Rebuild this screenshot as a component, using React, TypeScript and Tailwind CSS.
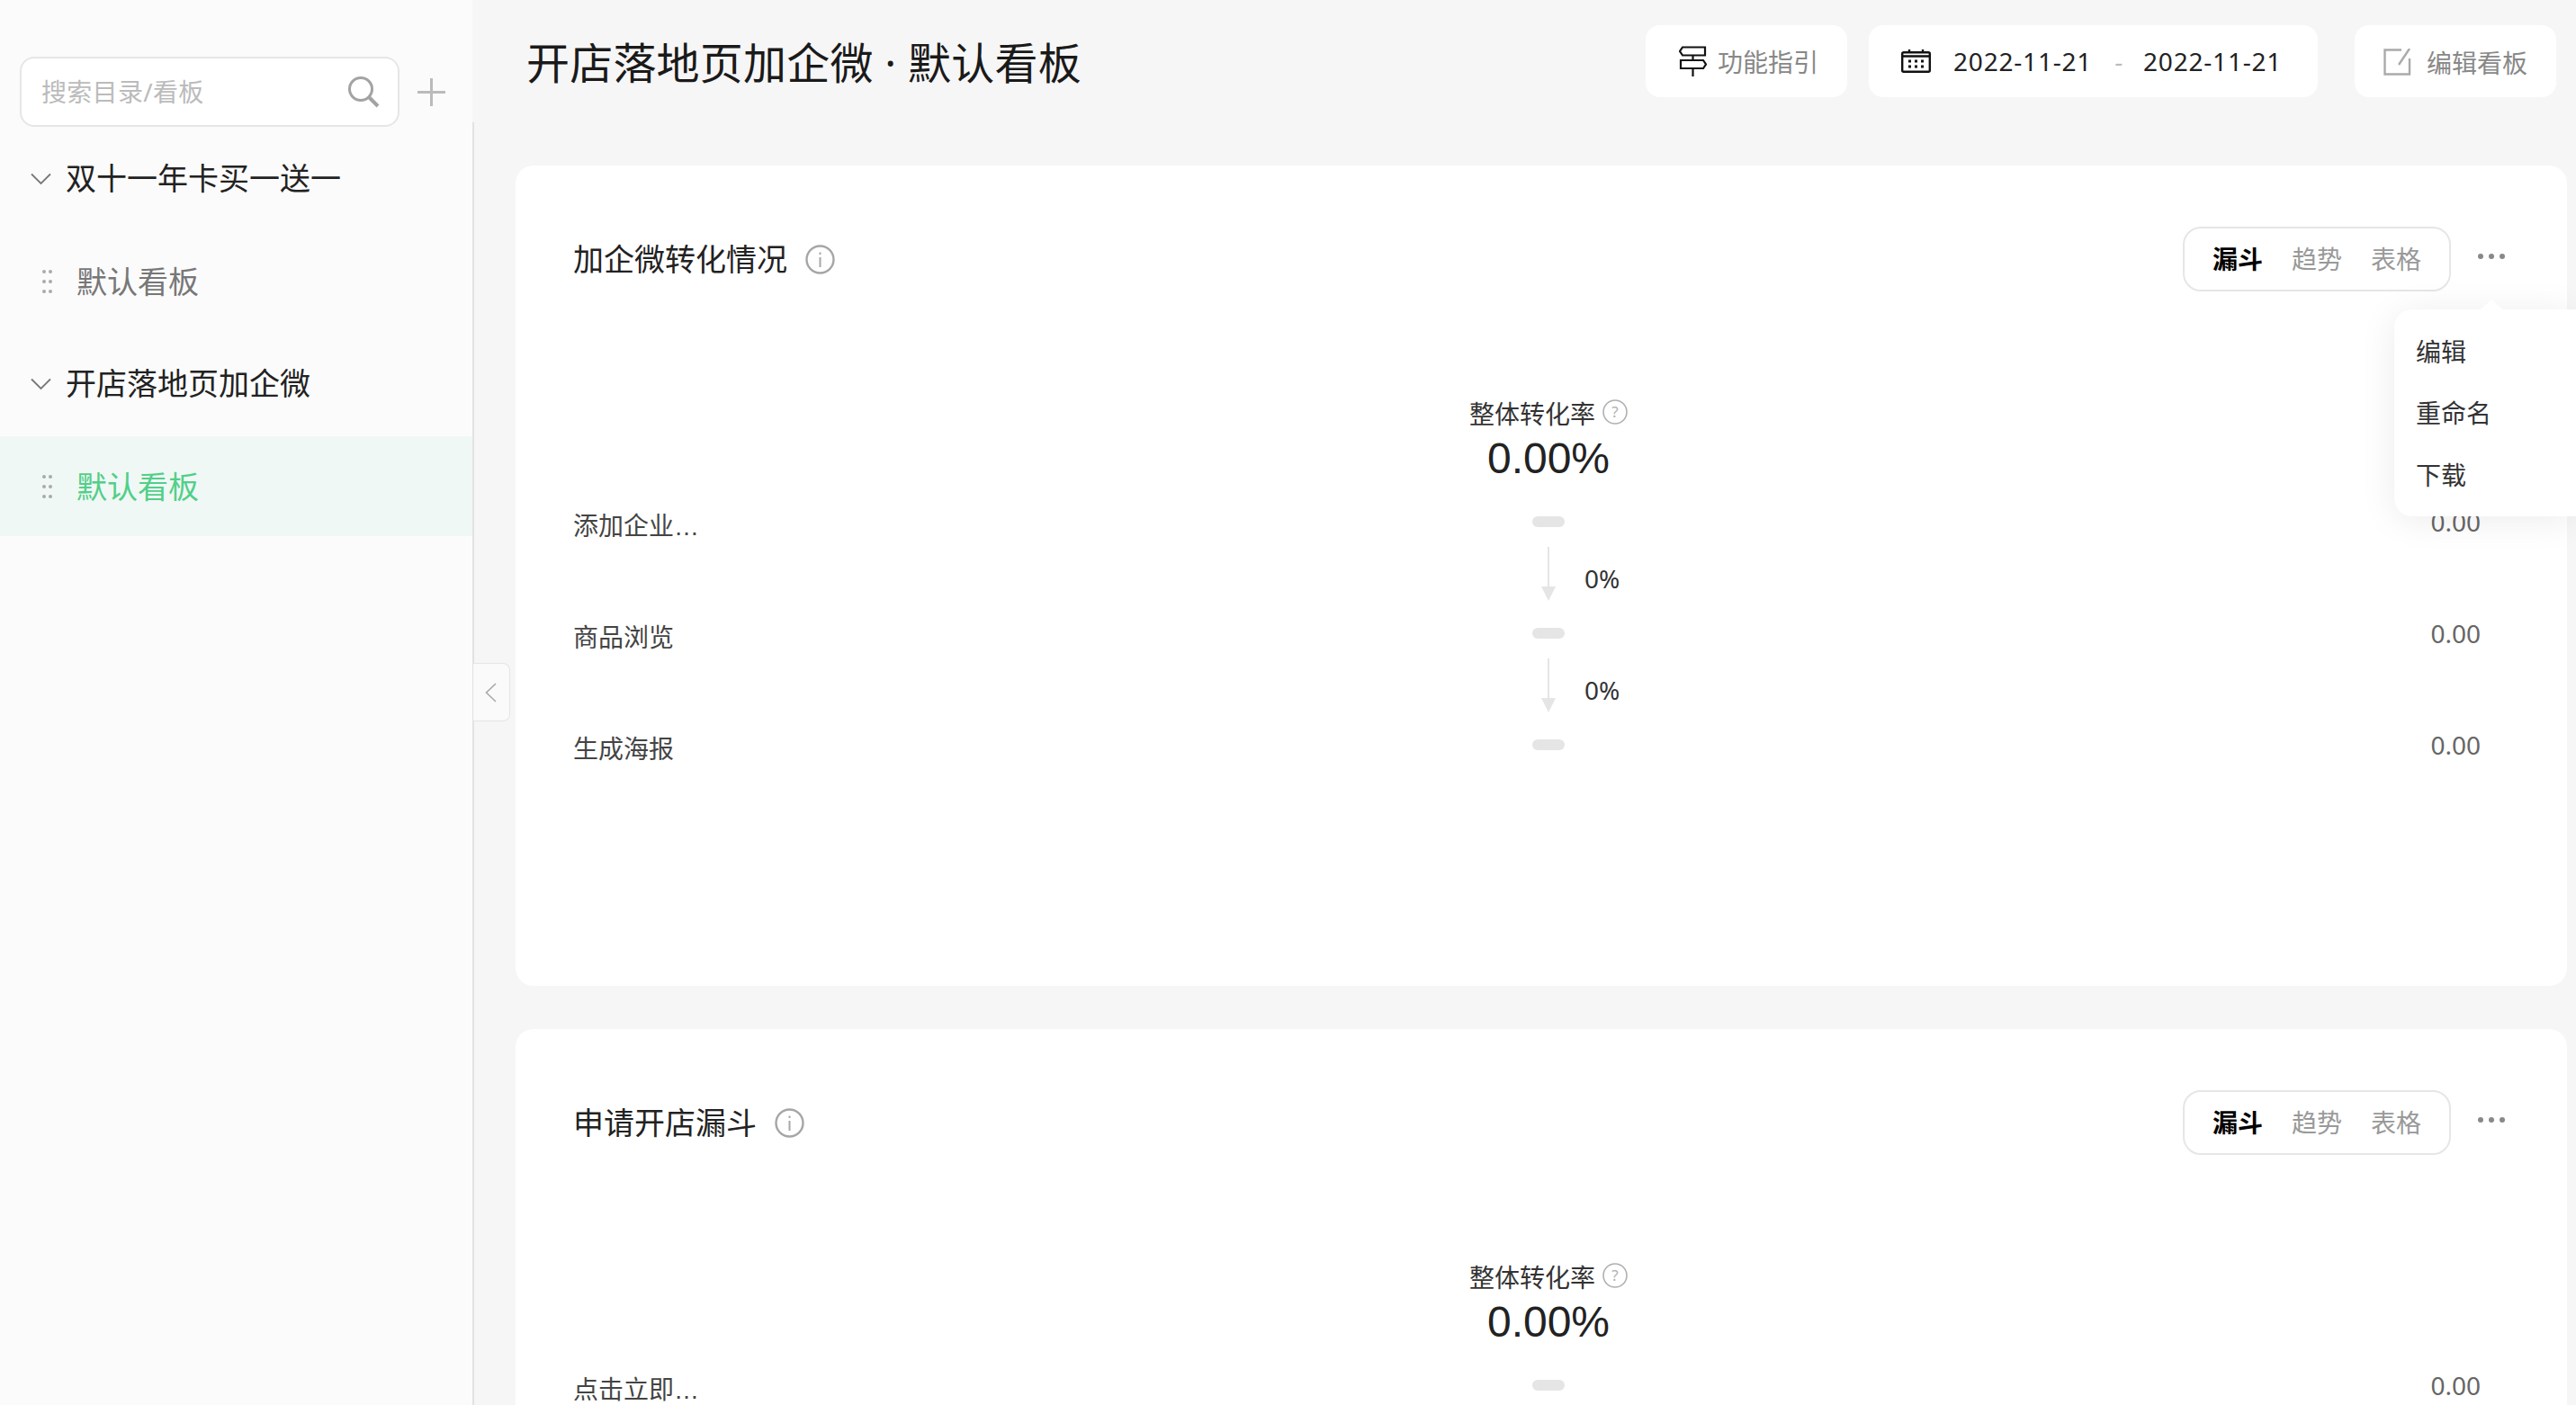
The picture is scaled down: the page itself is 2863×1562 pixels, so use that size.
import type { ReactNode } from "react";

const FONT = "font-['Noto_Sans','Noto_Sans_CJK_SC',sans-serif]";

function Chevron() {
  return (
    <svg width="23" height="14" viewBox="0 0 23 14" fill="none" stroke="#777" strokeWidth="1.8">
      <path d="M1 1.5 11.5 12 22 1.5" />
    </svg>
  );
}

function DragDots() {
  return (
    <div className="grid w-[11px] grid-cols-2 gap-x-[3px] gap-y-[7px]">
      {[0, 1, 2, 3, 4, 5].map((i) => (
        <span key={i} className="h-1 w-1 rounded-full bg-[#aaa]" />
      ))}
    </div>
  );
}

function TreeGroup({ title }: { title: string }) {
  return (
    <div className="flex h-[111px] items-center gap-[16px] pl-[34px] text-[34px] text-[#222]">
      <Chevron />
      <span>{title}</span>
    </div>
  );
}

function TreeItem({ active = false }: { active?: boolean }) {
  return (
    <div
      className={
        active
          ? "flex h-[111px] items-center gap-[27px] bg-[#f0f8f5] pl-[47px] text-[34px] text-[#52cf88]"
          : "flex h-[111px] items-center gap-[27px] pl-[47px] text-[34px] text-[#777]"
      }
    >
      <DragDots />
      <span className="pt-[2px]">默认看板</span>
    </div>
  );
}

function Sidebar() {
  return (
    <aside className="h-full w-[525px] shrink-0 bg-[#fbfbfb] pt-[63px]">
      <div className="flex items-center pl-[22px]">
        <div className="flex h-[78px] w-[422px] items-center justify-between rounded-[16px] border-2 border-[#e6e6e6] bg-white pr-[20px] pl-[22px]">
          <input
            placeholder="搜索目录/看板"
            className="w-[240px] bg-transparent text-[28px] tracking-[0.3px] outline-none placeholder:text-[#bbb]"
          />
          <svg width="36" height="36" viewBox="0 0 36 36" fill="none" stroke="#a3a3a3" strokeWidth="3">
            <circle cx="15" cy="15" r="12.5" />
            <path d="M24 24 34 34" strokeWidth="4" />
          </svg>
        </div>
        <svg className="ml-[20px]" width="31" height="31" viewBox="0 0 31 31" stroke="#bbb" strokeWidth="3">
          <path d="M0 15.5H31M15.5 0V31" />
        </svg>
      </div>
      <div className="mt-[2px] flex flex-col gap-[3px]">
        <TreeGroup title="双十一年卡买一送一" />
        <TreeItem />
        <TreeGroup title="开店落地页加企微" />
        <TreeItem active />
      </div>
    </aside>
  );
}

function HeaderButton({ className, children }: { className: string; children: ReactNode }) {
  return (
    <div className={`flex h-[80px] items-center rounded-[16px] bg-white ${className}`}>
      {children}
    </div>
  );
}

function TopBar() {
  return (
    <header className="flex h-[136px] items-start justify-between pt-[28px] pr-[22px] pl-[60px]">
      <h1 className="text-[48px] leading-[84px] font-normal tracking-[0.2px] text-[#1a1a1a]">
        开店落地页加企微 · 默认看板
      </h1>
      <div className="flex">
        <HeaderButton className="w-[224px] gap-[12px] pl-[37px] text-[28px] text-[#888]">
          <svg width="31" height="34" viewBox="0 0 31 34" fill="none" stroke="#111" strokeWidth="2.2">
            <path d="M4 1.5H29V10.5H4L1 6Z" />
            <path d="M2 16H27L30 20.5L27 25H2Z" />
            <path d="M15.5 10.5V16M15.5 25V34" />
          </svg>
          <span className="pt-[2px]">功能指引</span>
        </HeaderButton>
        <HeaderButton className="ml-[24px] w-[499px] pl-[36px] text-[28px] tracking-[0.8px] text-[#222]">
          <svg width="33" height="26" viewBox="0 0 33 26" fill="none" stroke="#111" strokeWidth="2.4">
            <rect x="1.2" y="3.2" width="30.6" height="21.6" rx="1.5" />
            <path d="M1 7.5H32M9 0V4M24 0V4" />
            <path d="M8 13h3M15 13h3M22 13h3M8 19h3M15 19h3M22 19h3" strokeWidth="3" />
          </svg>
          <span className="ml-[25px]">2022-11-21</span>
          <span className="ml-[25px] text-[#bbb]">-</span>
          <span className="ml-[22px]">2022-11-21</span>
        </HeaderButton>
        <HeaderButton className="ml-[41px] w-[224px] gap-[17px] pt-[2px] pl-[32px] text-[28px] text-[#888]">
          <svg width="31" height="30" viewBox="0 0 31 30" fill="none" stroke="#aaa" strokeWidth="2.4">
            <path d="M20 1.5H1.5V28.5H29V11" />
            <path d="M29 0 17 18" />
          </svg>
          <span className="pt-[2px]">编辑看板</span>
        </HeaderButton>
      </div>
    </header>
  );
}

function InfoIcon() {
  return (
    <svg width="33" height="33" viewBox="0 0 33 33" fill="none" stroke="#a6a6a6" strokeWidth="2.4">
      <circle cx="16.5" cy="16.5" r="15" />
      <path d="M16.5 14V25" strokeWidth="2" />
      <path d="M16.5 8.5V11" strokeWidth="2" />
    </svg>
  );
}

function DownArrow() {
  return (
    <svg width="16" height="60" viewBox="0 0 16 60" fill="#e5e5e5">
      <rect x="7" y="0" width="2" height="46" />
      <path d="M0 44H16L8 60Z" />
    </svg>
  );
}

const GRID = "grid grid-cols-[200px_1fr_152px]";

function FunnelRow({ label, value = "0.00" }: { label: string; value?: string }) {
  return (
    <div className={`${GRID} h-[40px] items-center text-[28px]`}>
      <span className="pt-[12px] font-['Liberation_Sans','Noto_Sans_CJK_SC',sans-serif] text-[#444]">{label}</span>
      <div className="flex justify-center">
        <span className="h-[12px] w-[36px] rounded-full bg-[#e5e5e5]" />
      </div>
      <span className="text-right text-[#666]">{value}</span>
    </div>
  );
}

function FunnelStep() {
  return (
    <div className={`${GRID} h-[84px]`}>
      <span />
      <div className="relative flex justify-center pt-[15px]">
        <DownArrow />
        <span className="absolute top-[30px] left-1/2 ml-[40px] text-[28px] leading-[40px] text-[#333]">0%</span>
      </div>
      <span />
    </div>
  );
}

interface CardProps {
  title: string;
  labels: string[];
}

function FunnelCard({ title, labels }: CardProps) {
  return (
    <section className="h-[912px] shrink-0 rounded-[20px] bg-white pt-[68px] pr-[69px] pl-[64px]">
      <div className="flex h-[72px] items-center justify-between">
        <div className="flex items-center gap-[20px]">
          <h2 className="text-[34px] font-normal text-[#222]">{title}</h2>
          <InfoIcon />
        </div>
        <div className="flex items-center gap-[30px]">
          <div className="flex h-[72px] w-[298px] items-center gap-[32px] rounded-[20px] border-2 border-[#e6e6e6] pl-[31px] text-[28px] text-[#999]">
            <span className="font-bold text-black">漏斗</span>
            <span>趋势</span>
            <span>表格</span>
          </div>
          <div className="mb-[6px] flex gap-[6px]">
            <span className="h-[6px] w-[6px] rounded-full bg-[#888]" />
            <span className="h-[6px] w-[6px] rounded-full bg-[#888]" />
            <span className="h-[6px] w-[6px] rounded-full bg-[#888]" />
          </div>
        </div>
      </div>
      <div className={`${GRID} mt-[116px] pr-[27px]`}>
        <span />
        <div className="flex flex-col items-center">
          <div className="flex items-center gap-[8px] text-[28px] leading-[40px] text-[#333]">
            整体转化率
            <svg className="-mt-[4px]" width="28" height="28" viewBox="0 0 28 28" fill="none" stroke="#b0b0b0" strokeWidth="1.6">
              <circle cx="14" cy="14" r="13" />
              <text x="14" y="20" textAnchor="middle" fontSize="17" fill="#b0b0b0" stroke="none">?</text>
            </svg>
          </div>
          <div className="mt-[3px] font-['Liberation_Sans',sans-serif] text-[48px] leading-[54px] text-[#222]">0.00%</div>
        </div>
        <span />
      </div>
      <div className="mt-[16px] flex flex-col pr-[27px]">
        {labels.map((label, index) => (
          <div key={label}>
            {index > 0 ? <FunnelStep /> : null}
            <FunnelRow label={label} />
          </div>
        ))}
      </div>
    </section>
  );
}

function MoreMenu() {
  return (
    <div className="absolute top-[344px] left-[2661px] flex h-[230px] w-[202px] flex-col gap-[28px] rounded-l-[20px] bg-white pt-[27px] pl-[24px] text-[28px] leading-[40px] text-[#333] shadow-[0_4px_40px_rgba(0,0,0,0.08)]">
      <span className="absolute -top-[11px] left-[96px] h-0 w-0 border-x-[12px] border-b-[11px] border-x-transparent border-b-white" />
      <span>编辑</span>
      <span>重命名</span>
      <span className="pt-[1px]">下载</span>
    </div>
  );
}

export default function App() {
  return (
    <div className={`relative flex h-[1562px] w-[2863px] overflow-hidden bg-[#f6f6f6] ${FONT}`}>
      <Sidebar />
      <main className="flex min-w-0 flex-1 flex-col">
        <TopBar />
        <div className="flex flex-1 flex-col gap-[48px] overflow-hidden border-l-2 border-[#e2e2e2] pt-[48px] pr-[10px] pl-[46px]">
          <FunnelCard title="加企微转化情况" labels={["添加企业…", "商品浏览", "生成海报"]} />
          <FunnelCard title="申请开店漏斗" labels={["点击立即…"]} />
        </div>
      </main>
      <button className="absolute top-[737px] left-[526px] flex h-[65px] w-[41px] items-center justify-center rounded-r-[8px] border border-l-0 border-[#e5e5e5] bg-[#fafafa] pr-[2px]">
        <svg width="13" height="22" viewBox="0 0 13 22" fill="none" stroke="#aaa" strokeWidth="1.6">
          <path d="M12 1 1.5 11 12 21" />
        </svg>
      </button>
      <MoreMenu />
    </div>
  );
}
